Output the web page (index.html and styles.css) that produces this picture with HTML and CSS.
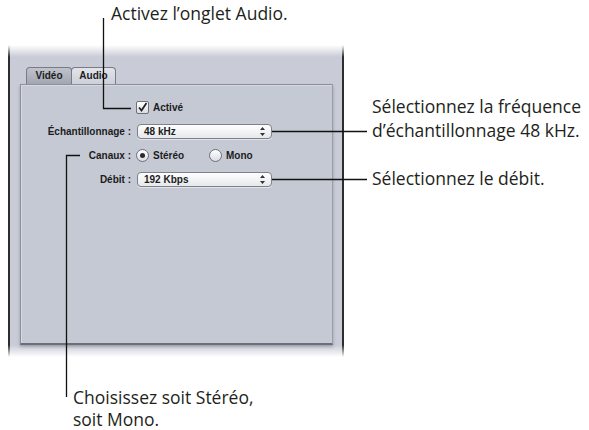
FILE: index.html
```html
<!DOCTYPE html>
<html lang="fr">

<head>
  <meta charset="UTF-8" />
  <title>Réglages audio</title>
  <link rel="stylesheet" href="styles.css">
</head>

<body>
  <div class="stage">
    <div class="window">
      <div class="tabs">
        <div class="tab">Vidéo</div>
        <div class="tab active">Audio</div>
      </div>
      <div class="panel">
        <div class="form">
          <span></span>
          <div class="check">
            <span class="box">
              <svg width="11" height="11" viewBox="0 0 11 11"><path d="M2 5.5 L4.5 8.5 L9.5 1" fill="none" stroke="#222" stroke-width="1.8" /></svg>
            </span>
            Activé
          </div>

          <span class="lbl">Échantillonnage :</span>
          <div class="popup">48 kHz
            <svg class="arrows" width="5" height="9" viewBox="0 0 5 9"><path d="M2.5 0 L5 3 L0 3 Z M0 6 L5 6 L2.5 9 Z" fill="#333" /></svg>
          </div>

          <span class="lbl">Canaux :</span>
          <div class="radios">
            <span class="radio on"></span><span class="rtext">Stéréo</span>
            <span class="radio"></span><span>Mono</span>
          </div>

          <span class="lbl">Débit :</span>
          <div class="popup">192 Kbps
            <svg class="arrows" width="5" height="9" viewBox="0 0 5 9"><path d="M2.5 0 L5 3 L0 3 Z M0 6 L5 6 L2.5 9 Z" fill="#333" /></svg>
          </div>
        </div>
      </div>
    </div>

    <!-- callout lines -->
    <svg class="leaders" width="589" height="430">
      <path d="M103.5 18 V108.5 H131" />
      <path d="M272 131.5 H367" />
      <path d="M272 179.5 H367" />
      <path d="M80 155.5 H66.5 V397" />
    </svg>

    <p class="note n1">Activez l’onglet Audio.</p>
    <p class="note n2">Sélectionnez la fréquence<br>d’échantillonnage 48 kHz.</p>
    <p class="note n3">Sélectionnez le débit.</p>
    <p class="note n4">Choisissez soit Stéréo,<br>soit Mono.</p>
  </div>
</body>

</html>
```

FILE: styles.css
```css
body {
  margin: 0;
  background: #fff;
}

.stage {
  position: relative;
  width: 589px;
  height: 430px;
  padding: 45px 0 0 8px;
  box-sizing: border-box;
  overflow: hidden;
}

.window {
  position: relative;
  width: 336px;
  height: 312px;
  box-sizing: border-box;
  padding-top: 22px;
  border-left: 2px solid #2c2d31;
  border-right: 2px solid #2c2d31;
  background: #c9ccd6;
  font-family: 'Liberation Sans', Arial, sans-serif;
  font-size: 10px;
  font-weight: bold;
  color: #1c1c1c;
}

/* fade at the top and bottom of the cut-out window */
.window::before,
.window::after {
  content: '';
  position: absolute;
  left: -2px;
  right: -2px;
  height: 12px;
}

.window::before {
  top: 0;
  background: linear-gradient(#fff, rgba(255, 255, 255, 0));
}

.window::after {
  bottom: 0;
  background: linear-gradient(rgba(255, 255, 255, 0), #fff);
}

.tabs {
  display: flex;
  margin-left: 16px;
  height: 17px;
}

.tab {
  width: 46px;
  box-sizing: border-box;
  border: 1px solid #777b85;
  border-bottom: none;
  border-radius: 4px 4px 0 0;
  background: linear-gradient(#c0c3cc, #a2a6b0);
  text-align: center;
  line-height: 16px;
}

.tab.active {
  width: 45px;
  margin-left: -1px;
  background: linear-gradient(#e2e4ea, #cdd0d9);
}

.panel {
  margin: 0 9px 0 10px;
  height: 261px;
  box-sizing: border-box;
  border: 1px solid #8c909a;
  border-bottom: 2px solid #6b6f79;
  border-right-color: #9a9ea8;
  background: #c5c9d4;
  box-shadow: 0 2px 3px rgba(60, 62, 70, 0.35), inset 1px 1px 0 #d6d9e1;
}

.form {
  display: grid;
  grid-template-columns: 110px auto;
  grid-auto-rows: 24px;
  column-gap: 5px;
  align-items: center;
  padding-top: 10px;
}

.lbl {
  text-align: right;
}

.check {
  display: flex;
  align-items: center;
  gap: 4px;
}

.box {
  width: 13px;
  height: 13px;
  box-sizing: border-box;
  border: 1px solid #6c7079;
  border-radius: 2px;
  background: linear-gradient(#fff, #d9dce3);
  display: flex;
  align-items: center;
  justify-content: center;
}

.popup {
  position: relative;
  width: 135px;
  height: 15px;
  box-sizing: border-box;
  margin-left: 1px;
  padding-left: 6px;
  border: 1px solid #7d818b;
  border-radius: 4px;
  background: linear-gradient(#fefefe, #e6e8ec);
  line-height: 13px;
  box-shadow: 0 1px 0 rgba(255, 255, 255, 0.5);
}

.arrows {
  position: absolute;
  right: 6px;
  top: 2px;
}

.radios {
  display: flex;
  align-items: center;
}

.radio {
  width: 13px;
  height: 13px;
  box-sizing: border-box;
  border: 1px solid #6c7079;
  border-radius: 50%;
  background: linear-gradient(#fff, #d9dce3);
  margin-right: 4px;
  display: flex;
  align-items: center;
  justify-content: center;
}

.radio.on::after {
  content: '';
  width: 5px;
  height: 5px;
  border-radius: 50%;
  background: #2a2a2e;
}

.rtext {
  width: 56px;
}

.leaders {
  position: absolute;
  left: 0;
  top: 0;
  fill: none;
  stroke: #111;
  stroke-width: 1.3;
}

.note {
  position: absolute;
  margin: 0;
  font-family: 'Open Sans', sans-serif;
  font-size: 17.5px;
  line-height: 24px;
  color: #231f20;
  white-space: nowrap;
}

.n1 {
  left: 111px;
  top: 1px;
}

.n2 {
  left: 372px;
  top: 94px;
}

.n3 {
  left: 372px;
  top: 166px;
}

.n4 {
  left: 73px;
  top: 386px;
  line-height: 22px;
}
```
